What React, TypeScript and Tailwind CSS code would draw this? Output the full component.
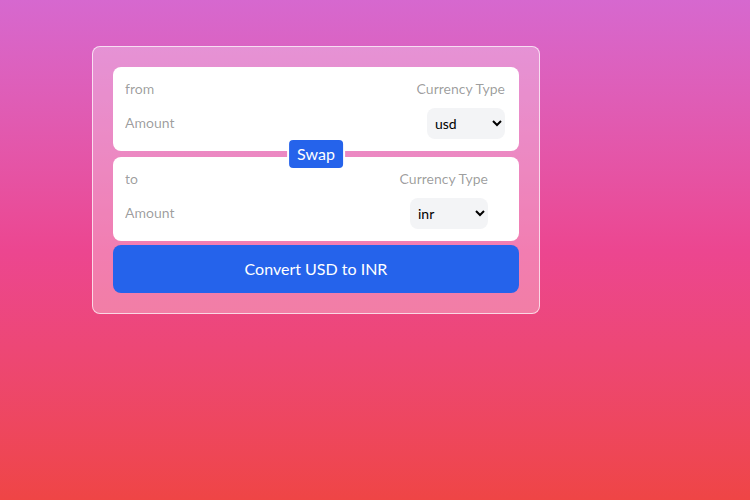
import { useState } from 'react';

type InputBoxProps = {
  label: string;
  currency: string;
  options: string[];
  onCurrencyChange: (c: string) => void;
  className?: string;
};

function InputBox({ label, currency, options, onCurrencyChange, className = '' }: InputBoxProps) {
  return (
    <div className={`bg-white pl-3 py-3 rounded-lg text-sm flex ${className}`}>
      <div className="w-1/2">
        <label className="text-black/40 mb-2 inline-block leading-5">{label}</label>
        <input
          type="number"
          placeholder="Amount"
          className="outline-none w-full bg-transparent py-1.5 leading-5 placeholder:text-black/40"
        />
      </div>
      <div className="w-1/2 flex flex-wrap justify-end text-right">
        <p className="text-black/40 mb-2 w-full leading-5">Currency Type</p>
        <select
          value={currency}
          onChange={(e) => onCurrencyChange(e.target.value)}
          className="rounded-lg px-1 w-[78px] h-[31px] bg-gray-100 cursor-pointer outline-none text-black"
        >
          {options.map((o) => (
            <option key={o} value={o}>
              {o}
            </option>
          ))}
        </select>
      </div>
    </div>
  );
}

export default function App() {
  const options = ['usd', 'inr', 'eur', 'gbp', 'jpy'];
  const [from, setFrom] = useState('usd');
  const [to, setTo] = useState('inr');

  const swap = () => {
    setFrom(to);
    setTo(from);
  };

  return (
    <div
      className="w-full h-screen bg-gradient-to-b from-[#d668cf] via-[#ec4690] to-[#ef4545] pt-[46px] pl-[92px]"
      style={{ fontFamily: 'Lato, "Open Sans", sans-serif' }}
    >
      <div className="w-[448px] border border-white/70 rounded-lg p-5 bg-white/30">
        <form onSubmit={(e) => e.preventDefault()}>
          <InputBox
            label="from"
            currency={from}
            options={options}
            onCurrencyChange={setFrom}
            className="pr-[14px]"
          />
          <div className="relative w-full h-[6px]">
            <button
              type="button"
              onClick={swap}
              className="absolute left-1/2 top-1/2 -translate-x-1/2 -translate-y-1/2 border-2 border-white rounded-md bg-[#2563eb] text-white text-base leading-6 px-2 py-0.5"
            >
              Swap
            </button>
          </div>
          <InputBox
            label="to"
            currency={to}
            options={options}
            onCurrencyChange={setTo}
            className="pr-[31px]"
          />
          <button
            type="submit"
            className="w-full mt-1 bg-[#2563eb] text-white text-base leading-6 px-4 py-3 rounded-lg"
          >
            Convert {from.toUpperCase()} to {to.toUpperCase()}
          </button>
        </form>
      </div>
    </div>
  );
}
